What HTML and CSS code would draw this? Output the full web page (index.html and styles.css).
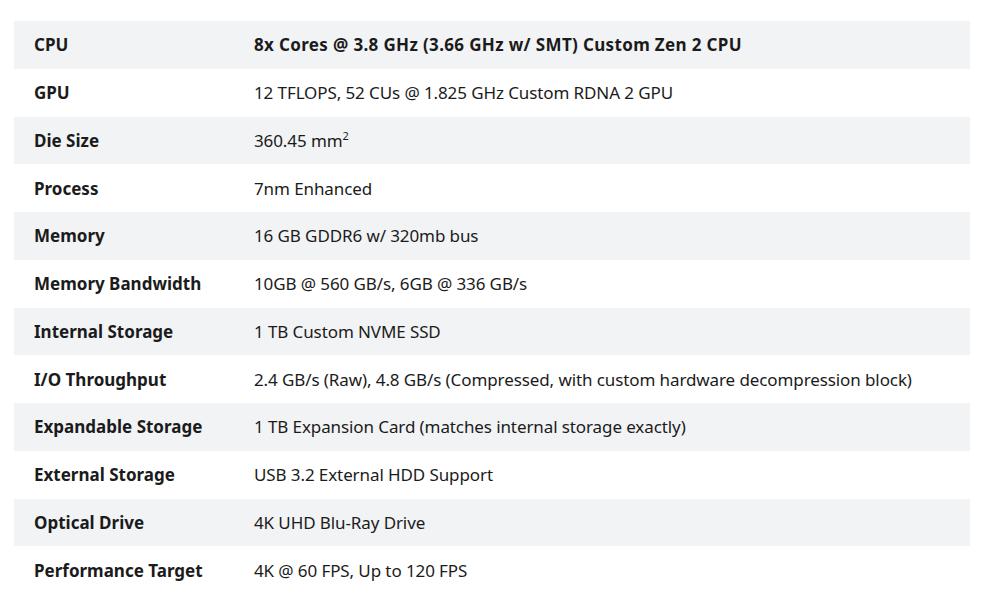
FILE: index.html
```html
<!DOCTYPE html>
<html lang="en">
<head>
<meta charset="utf-8">
<title>Specs</title>
<link rel="stylesheet" href="styles.css">
</head>
<body>
<table class="specs">
  <tbody>
    <tr><th>CPU</th><td class="strong">8x Cores @ 3.8 GHz (3.66 GHz w/ SMT) Custom Zen 2 CPU</td></tr>
    <tr><th>GPU</th><td>12 TFLOPS, 52 CUs @ 1.825 GHz Custom RDNA 2 GPU</td></tr>
    <tr><th>Die Size</th><td>360.45 mm<sup>2</sup></td></tr>
    <tr><th>Process</th><td>7nm Enhanced</td></tr>
    <tr><th>Memory</th><td>16 GB GDDR6 w/ 320mb bus</td></tr>
    <tr><th>Memory Bandwidth</th><td>10GB @ 560 GB/s, 6GB @ 336 GB/s</td></tr>
    <tr><th>Internal Storage</th><td>1 TB Custom NVME SSD</td></tr>
    <tr><th>I/O Throughput</th><td>2.4 GB/s (Raw), 4.8 GB/s (Compressed, with custom hardware decompression block)</td></tr>
    <tr><th>Expandable Storage</th><td>1 TB Expansion Card (matches internal storage exactly)</td></tr>
    <tr><th>External Storage</th><td>USB 3.2 External HDD Support</td></tr>
    <tr><th>Optical Drive</th><td>4K UHD Blu-Ray Drive</td></tr>
    <tr><th>Performance Target</th><td>4K @ 60 FPS, Up to 120 FPS</td></tr>
  </tbody>
</table>
</body>
</html>
```

FILE: styles.css
```css
html, body {
  margin: 0;
  padding: 0;
  background: #ffffff;
}
body {
  font-family: "Noto Sans", "Open Sans", sans-serif;
  color: #1b1b1b;
  padding: 21px 30px 0 14px;
}
.specs {
  width: 956px;
  border-collapse: collapse;
  font-size: 17px;
}
.specs tr {
  height: 47.75px;
}
.specs tr:nth-child(odd) {
  background: #f2f3f5;
}
.specs th,
.specs td {
  padding: 0 20px;
  text-align: left;
  vertical-align: middle;
  line-height: 24px;
}
.specs th {
  width: 180px;
  font-weight: 700;
  padding-top: 1px;
}
.specs td {
  font-weight: 400;
  padding-top: 1px;
  letter-spacing: -0.1px;
}
.specs td.strong {
  font-weight: 700;
  letter-spacing: 0.35px;
}
.specs sup {
  font-size: 11px;
  line-height: 0;
  vertical-align: 7px;
}
```
